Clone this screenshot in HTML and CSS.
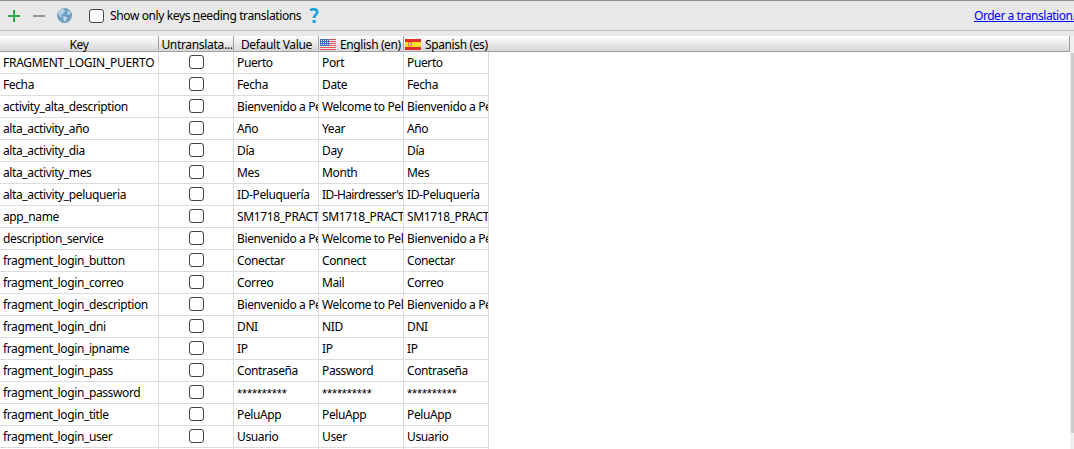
FILE: index.html
```
<!DOCTYPE html>
<html lang="en">
<head>
<meta charset="utf-8">
<title>Translations Editor</title>
<link rel="stylesheet" href="styles.css">
</head>
<body>
<div class="toolbar">
  <svg class="add" width="12" height="12" viewBox="0 0 12 12"><path d="M6 0V12M0 6H12" stroke="#2fa84c" stroke-width="2"/></svg>
  <svg class="remove" width="12" height="12" viewBox="0 0 12 12"><path d="M0 6H12" stroke="#969696" stroke-width="2"/></svg>
  <svg class="globe" width="15" height="15" viewBox="0 0 14 14"><circle cx="7" cy="7" r="7" fill="#6f9fc0"/><path d="M1 3.2L4 .8 7 .5 6.5 2 8 3 6.2 4.5 5 6.2 3.4 6 4.5 8 3.8 9 2.2 6.8.8 6Z" fill="#b5d0e0"/><path d="M9.5 2L12 3.2 13.2 5.6 11.8 5.4 10.6 6.8 9.3 5.3 10.3 4Z" fill="#bad4e3"/><path d="M5.8 7.6L8.5 8.2 9.8 9.5 8.2 11.3 7.5 13.3 6.3 12 6 10Z" fill="#c4dbe8"/></svg>
  <span class="box"></span>
  <span class="filter">Show only keys <u>n</u>eeding translations</span>
  <svg class="help" width="12" height="15" viewBox="0 0 12 15"><path d="M1.2 2.3C3.5.8 8.3.7 8.3 4.1 8.3 6.8 5 6.8 5 10" fill="none" stroke="#1ba1e2" stroke-width="2.6"/><path d="M3.6 12H6.6V15H3.6Z" fill="#1ba1e2"/></svg>
  <a class="order">Order a translation.</a>
</div>
<div class="main">
  <div class="table">
    <div class="head">
      <span class="h-key">Key</span><span class="h-un">Untranslata...</span><span class="h-def">Default Value</span>
      <span class="h-lang"><svg width="16" height="11" viewBox="0 0 16 11"><path fill="#f4e9e9" d="M0 0H16V11H0Z"/><path d="M0 .5H16M0 2.5H16M0 4.5H16M0 6.5H16M0 8.5H16M0 10.5H16" stroke="#dc5558"/><path fill="#416fc4" d="M0 0H9V7H0Z"/><path d="M1 1.5H9M1 3.5H9M1 5.5H9" stroke="#d5e0f5" stroke-dasharray="1 1"/></svg>English (en)</span>
      <span class="h-lang"><svg width="16" height="11" viewBox="0 0 16 11"><path fill="#e22d27" d="M0 0H16V11H0Z"/><path fill="#ffdf2e" d="M0 3H16V8H0Z"/><path fill="#d78a45" d="M3 3H7V7L5 8 3 7Z"/><path fill="#e9c6a0" d="M4 4H6V6H4Z"/></svg>Spanish (es)</span>
    </div>
    <div class="row"><span class="caps">FRAGMENT_LOGIN_PUERTO</span><i class="box"></i><span>Puerto</span><span>Port</span><span>Puerto</span></div>
    <div class="row"><span>Fecha</span><i class="box"></i><span>Fecha</span><span>Date</span><span>Fecha</span></div>
    <div class="row"><span>activity_alta_description</span><i class="box"></i><span>Bienvenido a Pe</span><span>Welcome to Pel</span><span>Bienvenido a Pe</span></div>
    <div class="row"><span>alta_activity_año</span><i class="box"></i><span>Año</span><span>Year</span><span>Año</span></div>
    <div class="row"><span>alta_activity_dia</span><i class="box"></i><span>Día</span><span>Day</span><span>Día</span></div>
    <div class="row"><span>alta_activity_mes</span><i class="box"></i><span>Mes</span><span>Month</span><span>Mes</span></div>
    <div class="row"><span>alta_activity_peluqueria</span><i class="box"></i><span>ID-Peluquería</span><span class="tight">ID-Hairdresser's</span><span>ID-Peluquería</span></div>
    <div class="row"><span>app_name</span><i class="box"></i><span>SM1718_PRACT</span><span>SM1718_PRACT</span><span>SM1718_PRACT</span></div>
    <div class="row"><span>description_service</span><i class="box"></i><span>Bienvenido a Pe</span><span>Welcome to Pel</span><span>Bienvenido a Pe</span></div>
    <div class="row"><span>fragment_login_button</span><i class="box"></i><span>Conectar</span><span>Connect</span><span>Conectar</span></div>
    <div class="row"><span>fragment_login_correo</span><i class="box"></i><span>Correo</span><span>Mail</span><span>Correo</span></div>
    <div class="row"><span>fragment_login_description</span><i class="box"></i><span>Bienvenido a Pe</span><span>Welcome to Pel</span><span>Bienvenido a Pe</span></div>
    <div class="row"><span>fragment_login_dni</span><i class="box"></i><span>DNI</span><span>NID</span><span>DNI</span></div>
    <div class="row"><span>fragment_login_ipname</span><i class="box"></i><span>IP</span><span>IP</span><span>IP</span></div>
    <div class="row"><span>fragment_login_pass</span><i class="box"></i><span>Contraseña</span><span>Password</span><span>Contraseña</span></div>
    <div class="row"><span>fragment_login_password</span><i class="box"></i><span class="stars">**********</span><span class="stars">**********</span><span class="stars">**********</span></div>
    <div class="row"><span>fragment_login_title</span><i class="box"></i><span>PeluApp</span><span>PeluApp</span><span>PeluApp</span></div>
    <div class="row"><span>fragment_login_user</span><i class="box"></i><span>Usuario</span><span>User</span><span>Usuario</span></div>
    <div class="row"><span></span><i></i><span></span><span></span><span></span></div>
  </div>
  <div class="scroll"><div class="thumb"></div></div>
</div>
</body>
</html>
```
FILE: styles.css
```
* { box-sizing: border-box; }
body {
  margin: 0;
  width: 1074px;
  height: 449px;
  overflow: hidden;
  display: flex;
  flex-direction: column;
  background: #e8e8e8;
  color: #000;
  font: 12px/21px "Noto Sans", "Open Sans", sans-serif;
  letter-spacing: -0.38px;
  white-space: nowrap;
}
svg { display: block; flex: none; }
.toolbar {
  flex: none;
  display: flex;
  align-items: center;
  height: 31px;
  padding-left: 8px;
  border-top: 1px solid #8c8c8c;
  border-bottom: 1px solid #bdbdbd;
}
.remove { margin-left: 13px; }
.globe { margin-left: 12px; }
.box {
  display: block;
  flex: none;
  width: 15px;
  height: 14px;
  border: 1px solid #444;
  border-radius: 3px;
  background: #fff;
}
.toolbar .box { margin-left: 17px; }
.filter { margin-left: 6px; }
.help { margin-left: 8px; }
.order {
  margin-left: auto;
  width: 100px;
  color: #00f;
  letter-spacing: -0.45px;
  text-decoration: underline;
}
.main {
  flex: 1;
  display: flex;
  margin-top: 5px;
  overflow: hidden;
}
.table { width: 1070px; background: #fff; }
.head {
  display: flex;
  height: 16px;
  line-height: 17px;
  background: linear-gradient(#fff, #d6d6d6);
  border-bottom: 1px solid #a0a0a0;
  border-right: 1px solid #a0a0a0;
}
.head span {
  height: 14px;
  flex: none;
  overflow: visible;
  text-align: center;
  border-right: 1px solid #a0a0a0;
}
.head .h-key { width: 159px; }
.head .h-un { width: 75px; padding-left: 2px; letter-spacing: -0.32px; }
.head .h-def { width: 85px; padding-left: 1px; letter-spacing: -0.32px; }
.head .h-lang {
  width: 85px;
  display: flex;
  gap: 4px;
  padding: 3px 0 0 1px;
  line-height: 11px;
}
.head .h-lang:last-child { border: 0; }
.row {
  display: grid;
  grid-template-columns: 159px 75px 85px 85px 85px;
  width: 489px;
  height: 22px;
  border-bottom: 1px solid #dcdcdc;
  background: linear-gradient(90deg, transparent 158px, #dcdcdc 158px 159px, transparent 159px 233px, #dcdcdc 233px 234px, transparent 234px 318px, #dcdcdc 318px 319px, transparent 319px 403px, #dcdcdc 403px 404px, transparent 404px 488px, #dcdcdc 488px);
}
.row span { overflow: hidden; padding-left: 3px; margin-right: 1px; }
.row .caps { letter-spacing: -0.28px; }
.row .tight { letter-spacing: -0.6px; }
.row .box { margin: 3px 0 0 30px; }
.row .stars { letter-spacing: -0.1px; font-family: "Liberation Sans", sans-serif; font-size: 13px; line-height: 24px; }
.scroll { width: 4px; padding: 17px 0 0 1px; background: #f0f0f0; }
.thumb { height: 380px; background: #cdcdcd; }
```
